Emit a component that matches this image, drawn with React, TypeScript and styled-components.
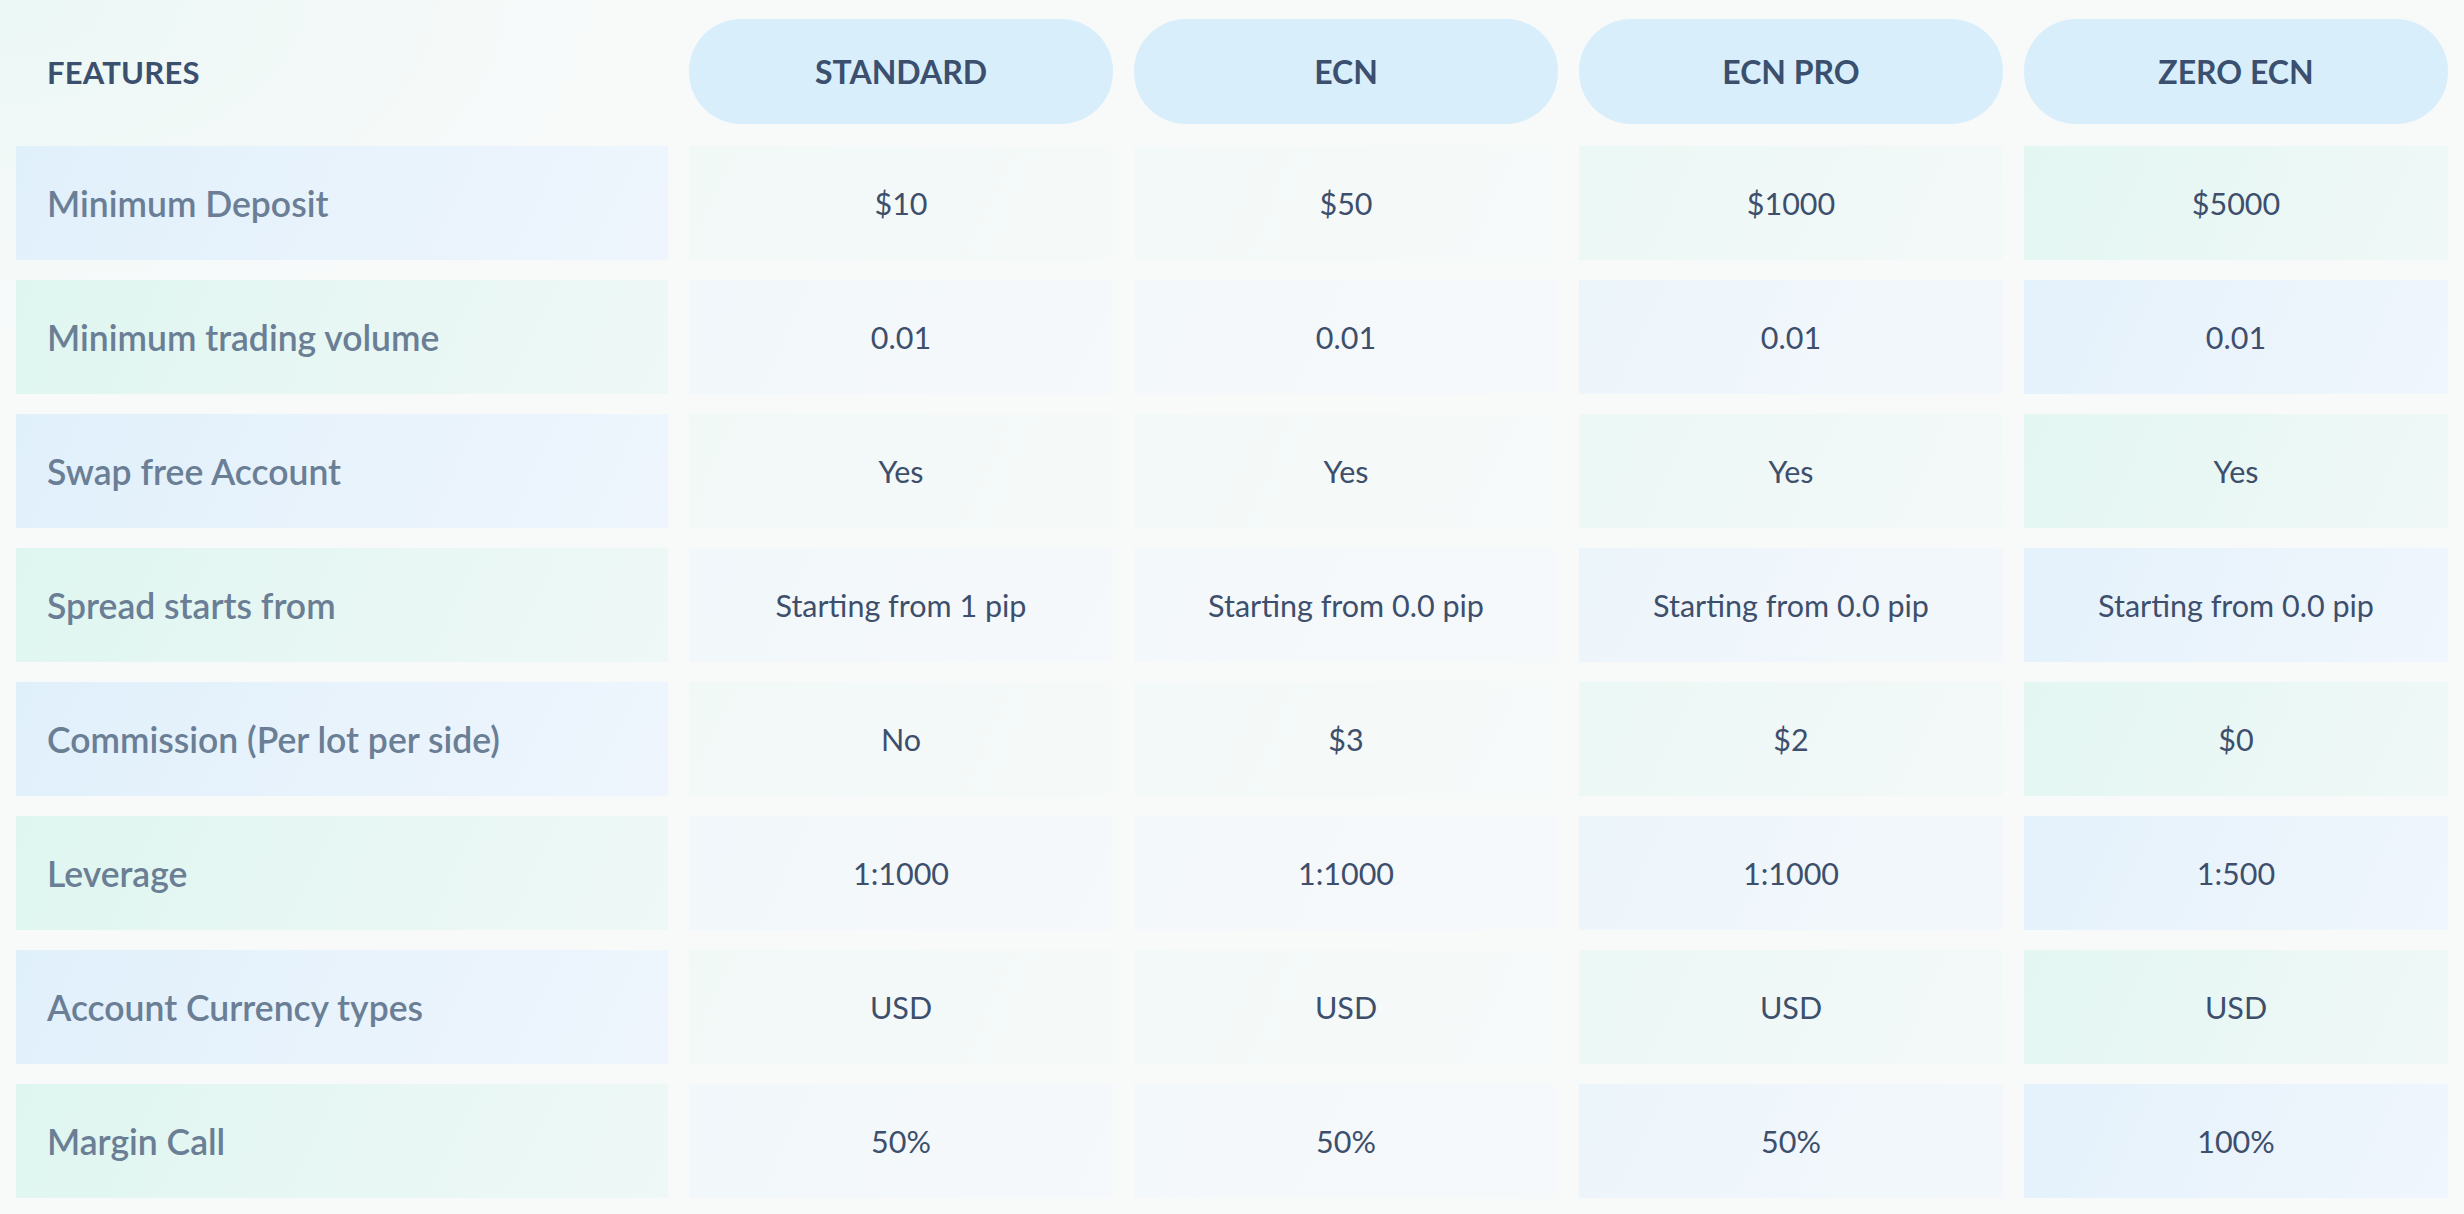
import styled, { createGlobalStyle, css } from "styled-components";

type Tone = "blue" | "mint";

interface CellProps {
  tone: Tone;
  strength?: number;
}

const plans = ["STANDARD", "ECN", "ECN PRO", "ZERO ECN"];

const rows: { label: string; values: string[] }[] = [
  { label: "Minimum Deposit", values: ["$10", "$50", "$1000", "$5000"] },
  { label: "Minimum trading volume", values: ["0.01", "0.01", "0.01", "0.01"] },
  { label: "Swap free Account", values: ["Yes", "Yes", "Yes", "Yes"] },
  {
    label: "Spread starts from",
    values: [
      "Starting from 1 pip",
      "Starting from 0.0 pip",
      "Starting from 0.0 pip",
      "Starting from 0.0 pip",
    ],
  },
  { label: "Commission (Per lot per side)", values: ["No", "$3", "$2", "$0"] },
  { label: "Leverage", values: ["1:1000", "1:1000", "1:1000", "1:500"] },
  { label: "Account Currency types", values: ["USD", "USD", "USD", "USD"] },
  { label: "Margin Call", values: ["50%", "50%", "50%", "100%"] },
];

// how strongly each plan column is tinted, left to right
const columnStrength = [0.28, 0.2, 0.5, 0.85];

const GlobalStyle = createGlobalStyle`
  html, body {
    margin: 0;
    padding: 0;
    background: #f8fafa;
  }
  body {
    font-family: Lato, "Open Sans", "Noto Sans", sans-serif;
  }
`;

const Page = styled.div`
  box-sizing: border-box;
  width: 2464px;
  height: 1214px;
  padding: 19px 16px 0 16px;
  display: grid;
  grid-template-columns: 652px repeat(4, 1fr);
  grid-template-rows: 107px repeat(8, 114px);
  column-gap: 21px;
  row-gap: 20px;
  background:
    radial-gradient(ellipse 900px 500px at 0% 0%, rgba(230, 247, 243, 0.7), rgba(248, 250, 250, 0) 70%),
    #f8fafa;
`;

const HeaderLabel = styled.div`
  display: flex;
  align-items: center;
  padding-left: 31px;
  margin-bottom: 2px;
  font-size: 31px;
  font-weight: 700;
  color: #3b4f6e;
  letter-spacing: 0.2px;
`;

const PlanPill = styled.div`
  display: flex;
  align-items: center;
  justify-content: center;
  margin-bottom: 2px;
  background: #d9eefb;
  border-radius: 52px;
  font-size: 32px;
  font-weight: 700;
  color: #3b4f6e;
`;

const tint = (tone: Tone, a: number) =>
  tone === "blue"
    ? css`
        background: linear-gradient(
          115deg,
          rgba(224, 240, 251, ${a}) 0%,
          rgba(233, 243, 252, ${a}) 55%,
          rgba(238, 245, 253, ${a}) 100%
        );
      `
    : css`
        background: linear-gradient(
          115deg,
          rgba(223, 246, 240, ${a}) 0%,
          rgba(232, 247, 244, ${a}) 55%,
          rgba(238, 248, 246, ${a}) 100%
        );
      `;

const FeatureCell = styled.div<CellProps>`
  display: flex;
  align-items: center;
  padding-left: 31px;
  font-size: 35.5px;
  font-weight: 600;
  color: #6a7e95;
  ${(p) => tint(p.tone, 1)}
`;

const ValueCell = styled.div<CellProps>`
  display: flex;
  align-items: center;
  justify-content: center;
  font-size: 30.5px;
  font-weight: 400;
  color: #3d4f6c;
  ${(p) => tint(p.tone, p.strength ?? 1)}
`;

function App() {
  return (
    <>
      <GlobalStyle />
      <Page>
        <HeaderLabel>FEATURES</HeaderLabel>
        {plans.map((plan) => (
          <PlanPill key={plan}>{plan}</PlanPill>
        ))}
        {rows.map((row, i) => {
          const featureTone: Tone = i % 2 === 0 ? "blue" : "mint";
          const planTone: Tone = i % 2 === 0 ? "mint" : "blue";
          return [
            <FeatureCell key={row.label} tone={featureTone}>
              {row.label}
            </FeatureCell>,
            ...row.values.map((value, j) => (
              <ValueCell
                key={row.label + j}
                tone={planTone}
                strength={columnStrength[j]}
              >
                {value}
              </ValueCell>
            )),
          ];
        })}
      </Page>
    </>
  );
}

export default App;
